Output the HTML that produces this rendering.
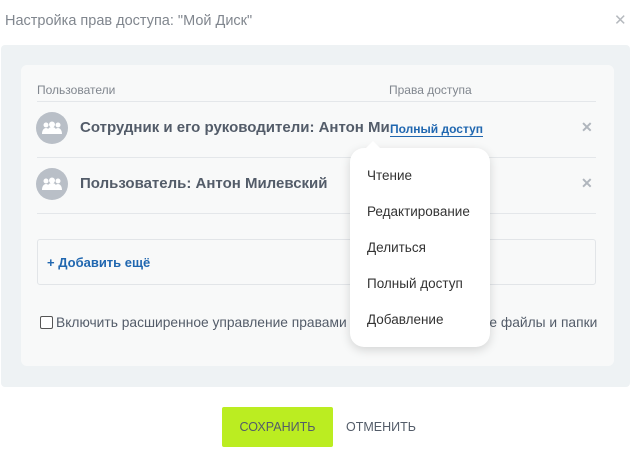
<!DOCTYPE html><html><head><meta charset="utf-8"><style>
body{margin:0;width:636px;height:456px;background:#fff;font-family:"Liberation Sans",sans-serif;position:relative;overflow:hidden;color:#535c69}
.a{position:absolute}
.t{font-size:13px;white-space:nowrap}
.av{width:32px;height:32px;border-radius:50%;background:#b9bfc7;display:flex;align-items:center;justify-content:center}
.ln{height:1px;background:#e4e7ea;left:37px;width:559px}
.x{color:#b0b6bd;font-size:14px;font-weight:bold}
.m{color:#333;font-size:13.5px}
</style></head><body>
<div class="a t" style="left:5px;top:13px;font-size:14.5px;color:#80868e">Настройка прав доступа: "Мой Диск"</div>
<div class="a" style="left:614px;top:11px;color:#b5b9be;font-size:15px">✕</div>
<div class="a" style="left:1px;top:45px;width:629px;height:342px;background:#eef2f4;border-radius:4px"></div>
<div class="a" style="left:21px;top:65px;width:593px;height:301px;background:#f8f9f9;border-radius:6px"></div>
<div class="a t" style="left:37px;top:83px;font-size:12px;color:#80868e">Пользователи</div>
<div class="a t" style="left:389px;top:83px;font-size:12px;color:#80868e">Права доступа</div>
<div class="a ln" style="top:101px"></div>
<div class="a av" style="left:36px;top:112px"><svg width="20" height="14" viewBox="0 0 20 14" fill="#fff"><circle cx="4" cy="4" r="2.5"/><circle cx="10" cy="3.5" r="3"/><circle cx="16" cy="4" r="2.5"/><path d="M0 13c0-4 2-6 4-6s4 2 4 6zM5 13c0-5 2-7 5-7s5 2 5 7zM12 13c0-4 2-6 4-6s4 2 4 6z"/></svg></div>
<div class="a t" style="left:80px;top:119px;font-size:15px;font-weight:bold;width:310px;overflow:hidden">Сотрудник и его руководители: Антон Милевский</div>
<div class="a t" style="left:390px;top:122px;font-size:12px;font-weight:bold;color:#2067b0;border-bottom:1px solid #2067b0">Полный доступ</div>
<div class="a x" style="left:581px;top:119px">✕</div>
<div class="a ln" style="top:157px"></div>
<div class="a av" style="left:36px;top:168px"><svg width="20" height="14" viewBox="0 0 20 14" fill="#fff"><circle cx="4" cy="4" r="2.5"/><circle cx="10" cy="3.5" r="3"/><circle cx="16" cy="4" r="2.5"/><path d="M0 13c0-4 2-6 4-6s4 2 4 6zM5 13c0-5 2-7 5-7s5 2 5 7zM12 13c0-4 2-6 4-6s4 2 4 6z"/></svg></div>
<div class="a t" style="left:80px;top:175px;font-size:15px;font-weight:bold">Пользователь: Антон Милевский</div>
<div class="a x" style="left:581px;top:175px">✕</div>
<div class="a ln" style="top:213px"></div>
<div class="a" style="left:37px;top:239px;width:557px;height:44px;border:1px solid #e2e5e8;border-radius:3px;background:#f8f9f9"></div>
<div class="a t" style="left:47px;top:255px;font-size:13px;font-weight:bold;color:#2067b0">+ Добавить ещё</div>
<div class="a" style="left:40px;top:316px;width:11px;height:11px;border:1px solid #555;border-radius:2px;background:#fff"></div>
<div class="a t" style="left:56px;top:315px;font-size:13.8px">Включить расширенное управление правами доступа на вложенные файлы и папки</div>
<div class="a" style="left:350px;top:148px;width:140px;height:199px;background:#fff;border-radius:14px;box-shadow:0 3px 10px rgba(0,0,0,.15)"></div>
<div class="a" style="left:365px;top:141px;width:0;height:0;border-left:8px solid transparent;border-right:8px solid transparent;border-bottom:8px solid #fff"></div>
<div class="a t m" style="left:367px;top:168px">Чтение</div>
<div class="a t m" style="left:367px;top:204px">Редактирование</div>
<div class="a t m" style="left:367px;top:240px">Делиться</div>
<div class="a t m" style="left:367px;top:276px">Полный доступ</div>
<div class="a t m" style="left:367px;top:312px">Добавление</div>
<div class="a" style="left:222px;top:407px;width:111px;height:40px;background:#bbed21;border-radius:2px;display:flex;align-items:center;justify-content:center;font-size:12.5px;color:#535c69">СОХРАНИТЬ</div>
<div class="a t" style="left:346px;top:420px;font-size:12.5px">ОТМЕНИТЬ</div>
</body></html>
